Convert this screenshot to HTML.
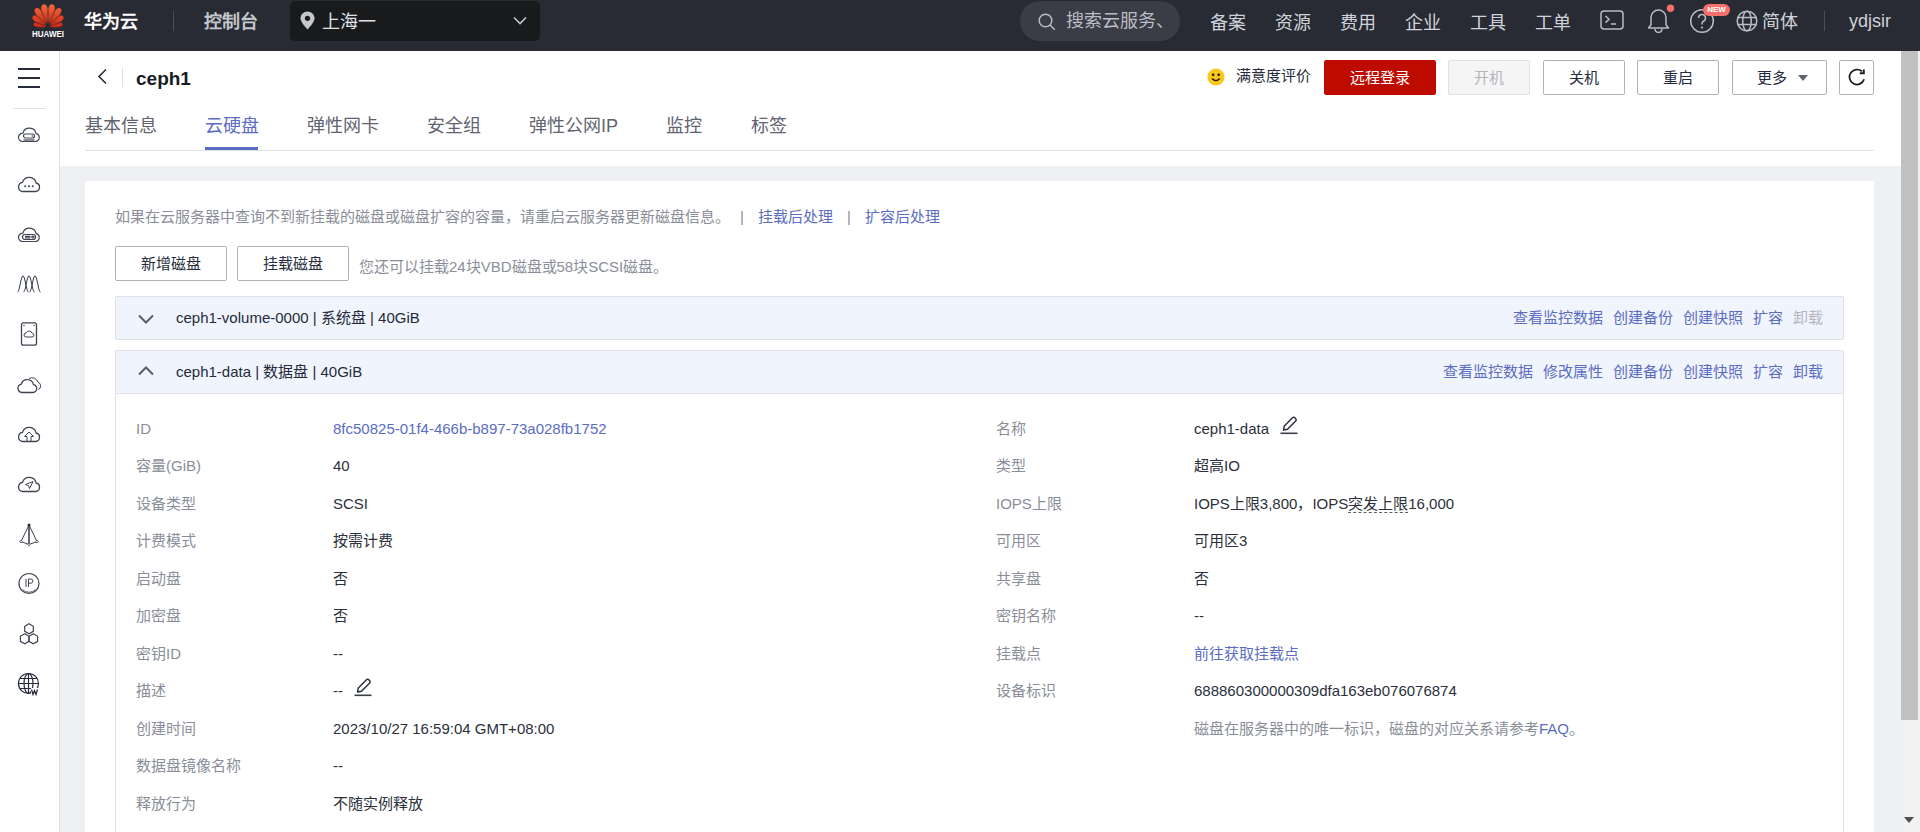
<!DOCTYPE html>
<html lang="zh-CN"><head><meta charset="utf-8">
<style>
*{box-sizing:border-box;margin:0;padding:0}
html,body{width:1920px;height:832px;overflow:hidden;background:#fff;line-height:1.15;font-family:"Liberation Sans",sans-serif;color:#252b3a}
.a{position:absolute;white-space:nowrap}
#hdr{position:absolute;left:0;top:0;width:1920px;height:51px;background:#282b33}
#side{position:absolute;left:0;top:51px;width:60px;height:781px;background:#fff;border-right:1px solid #dfe0e3}
#grey{position:absolute;left:60px;top:166px;width:1841px;height:666px;background:#eef0f3}
#card{position:absolute;left:85px;top:181px;width:1789px;height:651px;background:#fff}
#sb{position:absolute;left:1901px;top:51px;width:19px;height:781px;background:#f1f1f1}
#thumb{position:absolute;left:1901px;top:51px;width:17px;height:669px;background:#c1c1c1}
.hn{color:#cfd2d8;font-size:18px;top:13px}
.btn{position:absolute;height:35px;border:1px solid #b0b2b8;border-radius:2px;background:#fff;font-size:15px;line-height:33px;text-align:center;color:#252b3a}
.row{position:absolute;left:115px;width:1729px;height:44px;background:#f0f4fd;border:1px solid #dfe1e6;border-radius:2px}
.rt{position:absolute;left:60px;top:0;line-height:42px;font-size:15px;color:#252b3a;white-space:nowrap}
.acts{position:absolute;right:20px;top:0;line-height:42px;font-size:15px;color:#5a6dc2;white-space:nowrap}
.acts span{margin-left:10px}
.lb{font-size:15px;color:#8a8e99}
.vl{font-size:15px;color:#2b303b}
.lk{color:#5a6dc2}
</style></head><body>
<!-- header -->
<div id="hdr">
  <svg class="a" style="left:32px;top:3px" width="32" height="36" viewBox="0 0 32 36">
    <defs><linearGradient id="lg" x1="0" y1="0" x2="0" y2="1"><stop offset="0" stop-color="#f06a3c"/><stop offset="1" stop-color="#d8260f"/></linearGradient></defs>
    <path d="M15.30 20.50 C10.27 15.48 6.13 1.86 11.50 1.20 C16.72 -0.23 18.05 13.94 15.30 20.50 Z M16.70 20.50 C13.95 13.94 15.28 -0.23 20.50 1.20 C25.87 1.86 21.73 15.48 16.70 20.50 Z M14.60 21.20 C8.13 18.58 -0.95 7.85 3.60 5.20 C7.71 1.91 14.47 14.22 14.60 21.20 Z M17.40 21.20 C17.53 14.22 24.29 1.91 28.40 5.20 C32.95 7.85 23.87 18.58 17.40 21.20 Z M14.20 22.30 C8.27 22.52 -2.20 17.23 0.60 13.50 C2.85 9.42 11.97 16.80 14.20 22.30 Z M17.80 22.30 C20.03 16.80 29.15 9.42 31.40 13.50 C34.20 17.23 23.73 22.52 17.80 22.30 Z M14.60 23.40 C10.17 25.24 0.37 24.56 1.20 21.20 C1.49 17.75 10.99 20.24 14.60 23.40 Z M17.40 23.40 C21.01 20.24 30.51 17.75 30.80 21.20 C31.63 24.56 21.83 25.24 17.40 23.40 Z" fill="url(#lg)" stroke="#282b33" stroke-width="0.45"/>
    <text x="16" y="34" text-anchor="middle" font-family="Liberation Sans" font-weight="bold" font-size="8.6" textLength="32" lengthAdjust="spacingAndGlyphs" fill="#fff">HUAWEI</text>
  </svg>
  <div class="a" style="left:84px;top:12px;font-size:18px;color:#fff;font-weight:bold">华为云</div>
  <div class="a" style="left:173px;top:11px;width:1px;height:20px;background:#4a4e57"></div>
  <div class="a" style="left:204px;top:12px;font-size:18px;color:#c3c6cc;font-weight:bold">控制台</div>
  <div class="a" style="left:290px;top:1px;width:250px;height:40px;background:#191a1c;border-radius:5px"></div>
  <svg class="a" style="left:300px;top:11px" width="15" height="19" viewBox="0 0 15 19"><path d="M7.5 0.5C3.6 0.5 0.5 3.5 0.5 7.3 0.5 11.5 7.5 18.5 7.5 18.5S14.5 11.5 14.5 7.3C14.5 3.5 11.4 0.5 7.5 0.5Z" fill="#c4c7cc"/><circle cx="7.5" cy="7.3" r="2.6" fill="#191a1c"/></svg>
  <div class="a" style="left:322px;top:12px;font-size:18px;color:#dfe1e6">上海一</div>
  <svg class="a" style="left:513px;top:16px" width="14" height="9" viewBox="0 0 14 9"><path d="M1 1.5 7 7.5 13 1.5" fill="none" stroke="#c4c7cc" stroke-width="1.6"/></svg>
  <div class="a" style="left:1020px;top:1px;width:160px;height:40px;background:#3a3d45;border-radius:20px"></div>
  <svg class="a" style="left:1038px;top:13px" width="18" height="18" viewBox="0 0 18 18"><circle cx="7.5" cy="7.5" r="6.3" fill="none" stroke="#b9bcc2" stroke-width="1.5"/><path d="M12 12 16.8 16.8" stroke="#b9bcc2" stroke-width="1.5"/></svg>
  <div class="a" style="left:1066px;top:11px;font-size:18px;color:#b9bcc2">搜索云服务、</div>
  <div class="a hn" style="left:1210px">备案</div>
  <div class="a hn" style="left:1275px">资源</div>
  <div class="a hn" style="left:1340px">费用</div>
  <div class="a hn" style="left:1405px">企业</div>
  <div class="a hn" style="left:1470px">工具</div>
  <div class="a hn" style="left:1535px">工单</div>
  <svg class="a" style="left:1600px;top:10px" width="24" height="20" viewBox="0 0 24 20"><rect x="1" y="1" width="22" height="18" rx="3" fill="none" stroke="#b9bcc2" stroke-width="1.5"/><path d="M5.5 6 9 9.3 5.5 12.6M11 14h5" fill="none" stroke="#b9bcc2" stroke-width="1.5"/></svg>
  <svg class="a" style="left:1644px;top:3px" width="32" height="30" viewBox="0 0 32 30"><path d="M4.5 25h20l-2.5-3.3V14.5a7.5 7.5 0 0 0-15 0v7.2z" fill="none" stroke="#b9bcc2" stroke-width="1.5" stroke-linejoin="round"/><path d="M11 26a3.5 3.5 0 0 0 7 0" fill="none" stroke="#b9bcc2" stroke-width="1.5"/><circle cx="26.5" cy="5.2" r="3.7" fill="#f66f6a"/></svg>
  <svg class="a" style="left:1690px;top:8px" width="26" height="26" viewBox="0 0 26 26"><circle cx="12" cy="13" r="11.3" fill="none" stroke="#b9bcc2" stroke-width="1.5"/><path d="M8.5 10a3.5 3.5 0 1 1 5 3.2c-1 .5-1.5 1.2-1.5 2.3v1" fill="none" stroke="#b9bcc2" stroke-width="1.5"/><circle cx="12" cy="19.5" r="1.1" fill="#b9bcc2"/></svg>
  <div class="a" style="left:1703px;top:4px;width:27px;height:12px;background:#f66f6a;border-radius:6px;color:#fff;font-size:8px;font-weight:bold;line-height:12px;text-align:center">NEW</div>
  <svg class="a" style="left:1736px;top:10px" width="22" height="22" viewBox="0 0 22 22"><g fill="none" stroke="#b9bcc2" stroke-width="1.5"><circle cx="11" cy="11" r="9.8"/><ellipse cx="11" cy="11" rx="4.3" ry="9.8"/><path d="M1.5 7.5h19M1.5 14.5h19"/></g></svg>
  <div class="a" style="left:1762px;top:12px;font-size:18px;color:#cfd2d8">简体</div>
  <div class="a" style="left:1824px;top:11px;width:1px;height:20px;background:#4a4e57"></div>
  <div class="a" style="left:1849px;top:11px;font-size:18px;color:#cfd2d8">ydjsir</div>
</div>

<!-- sidebar -->
<div id="side"></div>
<div class="a" style="left:18px;top:68px;width:22px;height:2px;background:#252b3a"></div>
<div class="a" style="left:18px;top:77px;width:22px;height:2px;background:#252b3a"></div>
<div class="a" style="left:18px;top:86px;width:22px;height:2px;background:#252b3a"></div>
<div class="a" style="left:13px;top:108px;width:33px;height:1px;background:#e0e2e6"></div>
<svg class="a" style="left:17px;top:122px" width="24" height="24" viewBox="0 0 24 24"><g fill="none" stroke="#3f4452" stroke-width="1.2"><path d="M5.5 19.5h13a4 4 0 0 0 .6-7.9 6.8 6.8 0 0 0-13.2-.5A4.2 4.2 0 0 0 5.5 19.5z"/><rect x="6.5" y="12" width="11" height="4" rx="2"/><path d="M6.5 18h11"/></g><circle cx="15.3" cy="14" r=".8" fill="#3f4452"/></svg>
<svg class="a" style="left:17px;top:171px" width="24" height="24" viewBox="0 0 24 24"><g fill="none" stroke="#3f4452" stroke-width="1.3"><path d="M5.5 20.5h13a4.3 4.3 0 0 0 .6-8.5 7 7 0 0 0-13.6-.6A4.6 4.6 0 0 0 5.5 20.5z"/></g><g fill="#3f4452"><circle cx="8.2" cy="15.2" r="1"/><circle cx="12" cy="15.2" r="1"/><circle cx="15.8" cy="15.2" r="1"/></g></svg>
<svg class="a" style="left:17px;top:222px" width="24" height="24" viewBox="0 0 24 24"><g fill="none" stroke="#3f4452" stroke-width="1.2"><path d="M5.5 19.5h13a4 4 0 0 0 .6-7.9 6.8 6.8 0 0 0-13.2-.5A4.2 4.2 0 0 0 5.5 19.5z"/><rect x="5.5" y="12.5" width="13" height="5" rx="2.5"/><path d="M8 14.3h5.5M8 15.8h5.5"/><circle cx="15.8" cy="15" r="1"/></g></svg>
<svg class="a" style="left:17px;top:272px" width="24" height="24" viewBox="0 0 24 24"><g fill="none" stroke="#3f4452" stroke-width="1.1"><path d="M0.5 20C3 20 3.5 4 6 4S9 20 11.5 20"/><path d="M6.5 20C9 20 9.5 4 12 4S15 20 17.5 20"/><path d="M12.5 20C15 20 15.5 4 18 4S21 20 23.5 20"/></g></svg>
<svg class="a" style="left:17px;top:322px" width="24" height="24" viewBox="0 0 24 24"><g fill="none" stroke="#3f4452" stroke-width="1.3"><rect x="4.5" y="0.8" width="15" height="22.4" rx="2"/><path d="M9 15h6a1.8 1.8 0 0 0 .2-3.6 3.3 3.3 0 0 0-6.2-.3A1.9 1.9 0 0 0 9 15z" stroke-width="1"/></g><circle cx="7" cy="3.5" r=".7" fill="#3f4452"/><circle cx="17" cy="3.5" r=".7" fill="#3f4452"/></svg>
<svg class="a" style="left:17px;top:372px" width="24" height="24" viewBox="0 0 24 24"><g fill="none" stroke="#3f4452" stroke-width="1.3"><path d="M5 20.5h11a4 4 0 0 0 .5-7.9 6.3 6.3 0 0 0-12.2-.4A4.2 4.2 0 0 0 5 20.5z"/><path d="M12 6.5a6.3 6.3 0 0 1 9 3.8 3.8 3.8 0 0 1 .2 7.2" stroke-width="1"/></g></svg>
<svg class="a" style="left:17px;top:421px" width="24" height="24" viewBox="0 0 24 24"><g fill="none" stroke="#3f4452" stroke-width="1.3"><path d="M5.5 20.5h13a4.3 4.3 0 0 0 .6-8.5 7 7 0 0 0-13.6-.6A4.6 4.6 0 0 0 5.5 20.5z"/><path d="M10 20.5v-5H7.5L12 11l4.5 4.5H14v5" stroke-width="1"/></g></svg>
<svg class="a" style="left:17px;top:471px" width="24" height="24" viewBox="0 0 24 24"><g fill="none" stroke="#3f4452" stroke-width="1.3"><path d="M5.5 20.5h13a4.3 4.3 0 0 0 .6-8.5 7 7 0 0 0-13.6-.6A4.6 4.6 0 0 0 5.5 20.5z"/><path d="M8.5 13.5l7.5-3-3.5 7-1-3z" stroke-width="1"/></g></svg>
<svg class="a" style="left:17px;top:522px" width="24" height="24" viewBox="0 0 24 24"><g fill="none" stroke="#3f4452" stroke-width="1"><path d="M12 3 4 19.5 12 22.5 20 19.5z"/><path d="M12 3v19.5" stroke-width="1.6"/></g><circle cx="12" cy="3" r="1.5" fill="#252b3a"/><circle cx="4" cy="19.5" r="1.2" fill="#fff" stroke="#3f4452" stroke-width=".8"/><circle cx="20" cy="19.5" r="1.2" fill="#fff" stroke="#3f4452" stroke-width=".8"/><circle cx="12" cy="22.3" r="1.2" fill="#fff" stroke="#3f4452" stroke-width=".8"/></svg>
<svg class="a" style="left:17px;top:572px" width="24" height="24" viewBox="0 0 24 24"><g fill="none" stroke="#3f4452" stroke-width="1.2"><circle cx="12" cy="11.5" r="10"/><path d="M5.5 17.5a9 9 0 0 0 13 0" stroke-width=".9"/><path d="M9 7v8M11.5 15V7h2.3a2.1 2.1 0 0 1 0 4.2h-2.3" stroke-width="1"/></g></svg>
<svg class="a" style="left:17px;top:622px" width="24" height="24" viewBox="0 0 24 24"><g fill="none" stroke="#3f4452" stroke-width="1.2"><path d="M12 1.8l4.3 2.5v5l-4.3 2.5-4.3-2.5v-5z"/><path d="M7.7 11.8l4.3 2.5v5l-4.3 2.5-4.3-2.5v-5z"/><path d="M16.3 11.8l4.3 2.5v5l-4.3 2.5-4.3-2.5v-5z"/></g></svg>
<svg class="a" style="left:17px;top:672px" width="24" height="24" viewBox="0 0 24 24"><g fill="none" stroke="#252b3a" stroke-width="1.2"><circle cx="11.5" cy="11.5" r="10"/><ellipse cx="11.5" cy="11.5" rx="4.5" ry="10"/><path d="M1.5 11.5h20M3 6.5h17M3 16.5h12M11.5 1.5v20"/></g><rect x="14" y="16" width="9" height="8" fill="#fff"/><path d="M14.5 17.5l1.5 5 1.5-4 1.5 4 1.5-5" fill="none" stroke="#252b3a" stroke-width="1.2"/></svg>

<!-- page top -->
<svg class="a" style="left:96px;top:68px" width="12" height="17" viewBox="0 0 12 17"><path d="M10 1.5 3 8.5 10 15.5" fill="none" stroke="#252b3a" stroke-width="1.6"/></svg>
<div class="a" style="left:122px;top:67px;width:1px;height:20px;background:#dfe1e6"></div>
<div class="a" style="left:136px;top:68px;font-size:19px;font-weight:bold;color:#191c23">ceph1</div>

<svg class="a" style="left:1207px;top:68px" width="18" height="18" viewBox="0 0 18 18"><circle cx="9" cy="9" r="8.6" fill="#f7c81e"/><circle cx="6.1" cy="6.8" r="1.35" fill="#2a1a00"/><circle cx="11.7" cy="6.8" r="1.35" fill="#2a1a00"/><path d="M5 10.6Q8.9 14.6 12.8 10.6" fill="none" stroke="#2a1a00" stroke-width="1.4"/></svg>
<div class="a" style="left:1236px;top:67px;font-size:15px;color:#252b3a">满意度评价</div>
<div class="btn" style="left:1324px;top:60px;width:112px;background:#bd0b00;border-color:#bd0b00;color:#fff">远程登录</div>
<div class="btn" style="left:1448px;top:60px;width:82px;background:#f5f5f6;border-color:#dfe1e6;color:#b3b6bd">开机</div>
<div class="btn" style="left:1543px;top:60px;width:82px">关机</div>
<div class="btn" style="left:1637px;top:60px;width:82px">重启</div>
<div class="btn" style="left:1732px;top:60px;width:95px;text-align:left;padding-left:24px">更多<svg style="position:absolute;left:65px;top:14px" width="10" height="7" viewBox="0 0 10 7"><path d="M0 0h10L5 6z" fill="#5e6370"/></svg></div>
<div class="btn" style="left:1839px;top:60px;width:35px"><svg style="position:absolute;left:-1px;top:-1px" width="35" height="35" viewBox="0 0 35 35"><path d="M25.13 19.32 A7.5 7.5 0 1 1 23.02 11.43" fill="none" stroke="#191c23" stroke-width="1.7"/><path d="M20.8 13.3H24.8V9.6" fill="none" stroke="#191c23" stroke-width="1.9"/></svg></div>

<!-- tabs -->
<div class="a" style="left:85px;top:150px;width:1789px;height:1px;background:#dfe1e6"></div>
<div class="a" style="left:85px;top:116px;font-size:18px;color:#5f6470">基本信息</div>
<div class="a" style="left:205px;top:116px;font-size:18px;color:#5a6dc2">云硬盘</div>
<div class="a" style="left:205px;top:147px;width:53px;height:3px;background:#5a6dc2"></div>
<div class="a" style="left:307px;top:116px;font-size:18px;color:#5f6470">弹性网卡</div>
<div class="a" style="left:427px;top:116px;font-size:18px;color:#5f6470">安全组</div>
<div class="a" style="left:529px;top:116px;font-size:18px;color:#5f6470">弹性公网IP</div>
<div class="a" style="left:666px;top:116px;font-size:18px;color:#5f6470">监控</div>
<div class="a" style="left:751px;top:116px;font-size:18px;color:#5f6470">标签</div>

<div id="grey"></div>
<div id="card"></div>
<div id="sb"></div><div id="thumb"></div>
<svg class="a" style="left:1904px;top:817px" width="10" height="6" viewBox="0 0 10 6"><path d="M0 0h10L5 6z" fill="#505050"/></svg>

<!-- card content -->
<div class="a" style="left:115px;top:208px;font-size:15px;color:#8a8e99">如果在云服务器中查询不到新挂载的磁盘或磁盘扩容的容量，请重启云服务器更新磁盘信息。</div>
<div class="a" style="left:740px;top:208px;font-size:15px;color:#8a8e99">|</div>
<div class="a lk" style="left:758px;top:208px;font-size:15px">挂载后处理</div>
<div class="a" style="left:847px;top:208px;font-size:15px;color:#8a8e99">|</div>
<div class="a lk" style="left:865px;top:208px;font-size:15px">扩容后处理</div>

<div class="btn" style="left:115px;top:246px;width:112px;height:35px">新增磁盘</div>
<div class="btn" style="left:237px;top:246px;width:112px;height:35px">挂载磁盘</div>
<div class="a" style="left:359px;top:258px;font-size:15px;color:#8a8e99">您还可以挂载24块VBD磁盘或58块SCSI磁盘。</div>

<div class="row" style="top:296px">
  <svg style="position:absolute;left:22px;top:17px" width="16" height="10" viewBox="0 0 16 10"><path d="M1 1.5 8 8.5 15 1.5" fill="none" stroke="#575d6c" stroke-width="2"/></svg>
  <div class="rt">ceph1-volume-0000 | 系统盘 | 40GiB</div>
  <div class="acts"><span>查看监控数据</span><span>创建备份</span><span>创建快照</span><span>扩容</span><span style="color:#b3b6bd">卸载</span></div>
</div>
<div class="row" style="top:350px;border-radius:2px 2px 0 0">
  <svg style="position:absolute;left:22px;top:15px" width="16" height="10" viewBox="0 0 16 10"><path d="M1 8.5 8 1.5 15 8.5" fill="none" stroke="#575d6c" stroke-width="2"/></svg>
  <div class="rt">ceph1-data | 数据盘 | 40GiB</div>
  <div class="acts"><span>查看监控数据</span><span>修改属性</span><span>创建备份</span><span>创建快照</span><span>扩容</span><span>卸载</span></div>
</div>
<div class="a" style="left:115px;top:394px;width:1729px;height:460px;border:1px solid #dfe1e6;border-top:none"></div>

<div class="a lb" style="left:136px;top:420px">ID</div>
<div class="a lb" style="left:136px;top:457px">容量(GiB)</div>
<div class="a lb" style="left:136px;top:495px">设备类型</div>
<div class="a lb" style="left:136px;top:532px">计费模式</div>
<div class="a lb" style="left:136px;top:570px">启动盘</div>
<div class="a lb" style="left:136px;top:607px">加密盘</div>
<div class="a lb" style="left:136px;top:645px">密钥ID</div>
<div class="a lb" style="left:136px;top:682px">描述</div>
<div class="a lb" style="left:136px;top:720px">创建时间</div>
<div class="a lb" style="left:136px;top:757px">数据盘镜像名称</div>
<div class="a lb" style="left:136px;top:795px">释放行为</div>

<div class="a vl lk" style="left:333px;top:420px">8fc50825-01f4-466b-b897-73a028fb1752</div>
<div class="a vl" style="left:333px;top:457px">40</div>
<div class="a vl" style="left:333px;top:495px">SCSI</div>
<div class="a vl" style="left:333px;top:532px">按需计费</div>
<div class="a vl" style="left:333px;top:570px">否</div>
<div class="a vl" style="left:333px;top:607px">否</div>
<div class="a vl" style="left:333px;top:645px">--</div>
<div class="a vl" style="left:333px;top:682px">--</div>
<svg class="a" style="left:354px;top:677px" width="20" height="20" viewBox="0 0 20 20"><path d="M3.5 15 4.3 11 12.5 2.8a1.6 1.6 0 0 1 2.3 0l.9.9a1.6 1.6 0 0 1 0 2.3L7.5 14.2z" fill="none" stroke="#252b3a" stroke-width="1.4" stroke-linejoin="round"/><path d="M0.5 18.3h17" stroke="#3a3f4a" stroke-width="1.6"/></svg>
<div class="a vl" style="left:333px;top:720px">2023/10/27 16:59:04 GMT+08:00</div>
<div class="a vl" style="left:333px;top:757px">--</div>
<div class="a vl" style="left:333px;top:795px">不随实例释放</div>

<div class="a lb" style="left:996px;top:420px">名称</div>
<div class="a lb" style="left:996px;top:457px">类型</div>
<div class="a lb" style="left:996px;top:495px">IOPS上限</div>
<div class="a lb" style="left:996px;top:532px">可用区</div>
<div class="a lb" style="left:996px;top:570px">共享盘</div>
<div class="a lb" style="left:996px;top:607px">密钥名称</div>
<div class="a lb" style="left:996px;top:645px">挂载点</div>
<div class="a lb" style="left:996px;top:682px">设备标识</div>

<div class="a vl" style="left:1194px;top:420px">ceph1-data</div>
<svg class="a" style="left:1280px;top:415px" width="20" height="20" viewBox="0 0 20 20"><path d="M3.5 15 4.3 11 12.5 2.8a1.6 1.6 0 0 1 2.3 0l.9.9a1.6 1.6 0 0 1 0 2.3L7.5 14.2z" fill="none" stroke="#252b3a" stroke-width="1.4" stroke-linejoin="round"/><path d="M0.5 18.3h17" stroke="#3a3f4a" stroke-width="1.6"/></svg>
<div class="a vl" style="left:1194px;top:457px">超高IO</div>
<div class="a vl" style="left:1194px;top:495px">IOPS上限3,800，IOPS<span style="border-bottom:1px dashed #575d6c">突发上限</span>16,000</div>
<div class="a vl" style="left:1194px;top:532px">可用区3</div>
<div class="a vl" style="left:1194px;top:570px">否</div>
<div class="a vl" style="left:1194px;top:607px">--</div>
<div class="a vl lk" style="left:1194px;top:645px">前往获取挂载点</div>
<div class="a vl" style="left:1194px;top:682px">688860300000309dfa163eb076076874</div>
<div class="a" style="left:1194px;top:720px;font-size:15px;color:#8a8e99">磁盘在服务器中的唯一标识，磁盘的对应关系请参考<span class="lk">FAQ</span>。</div>

</body></html>
